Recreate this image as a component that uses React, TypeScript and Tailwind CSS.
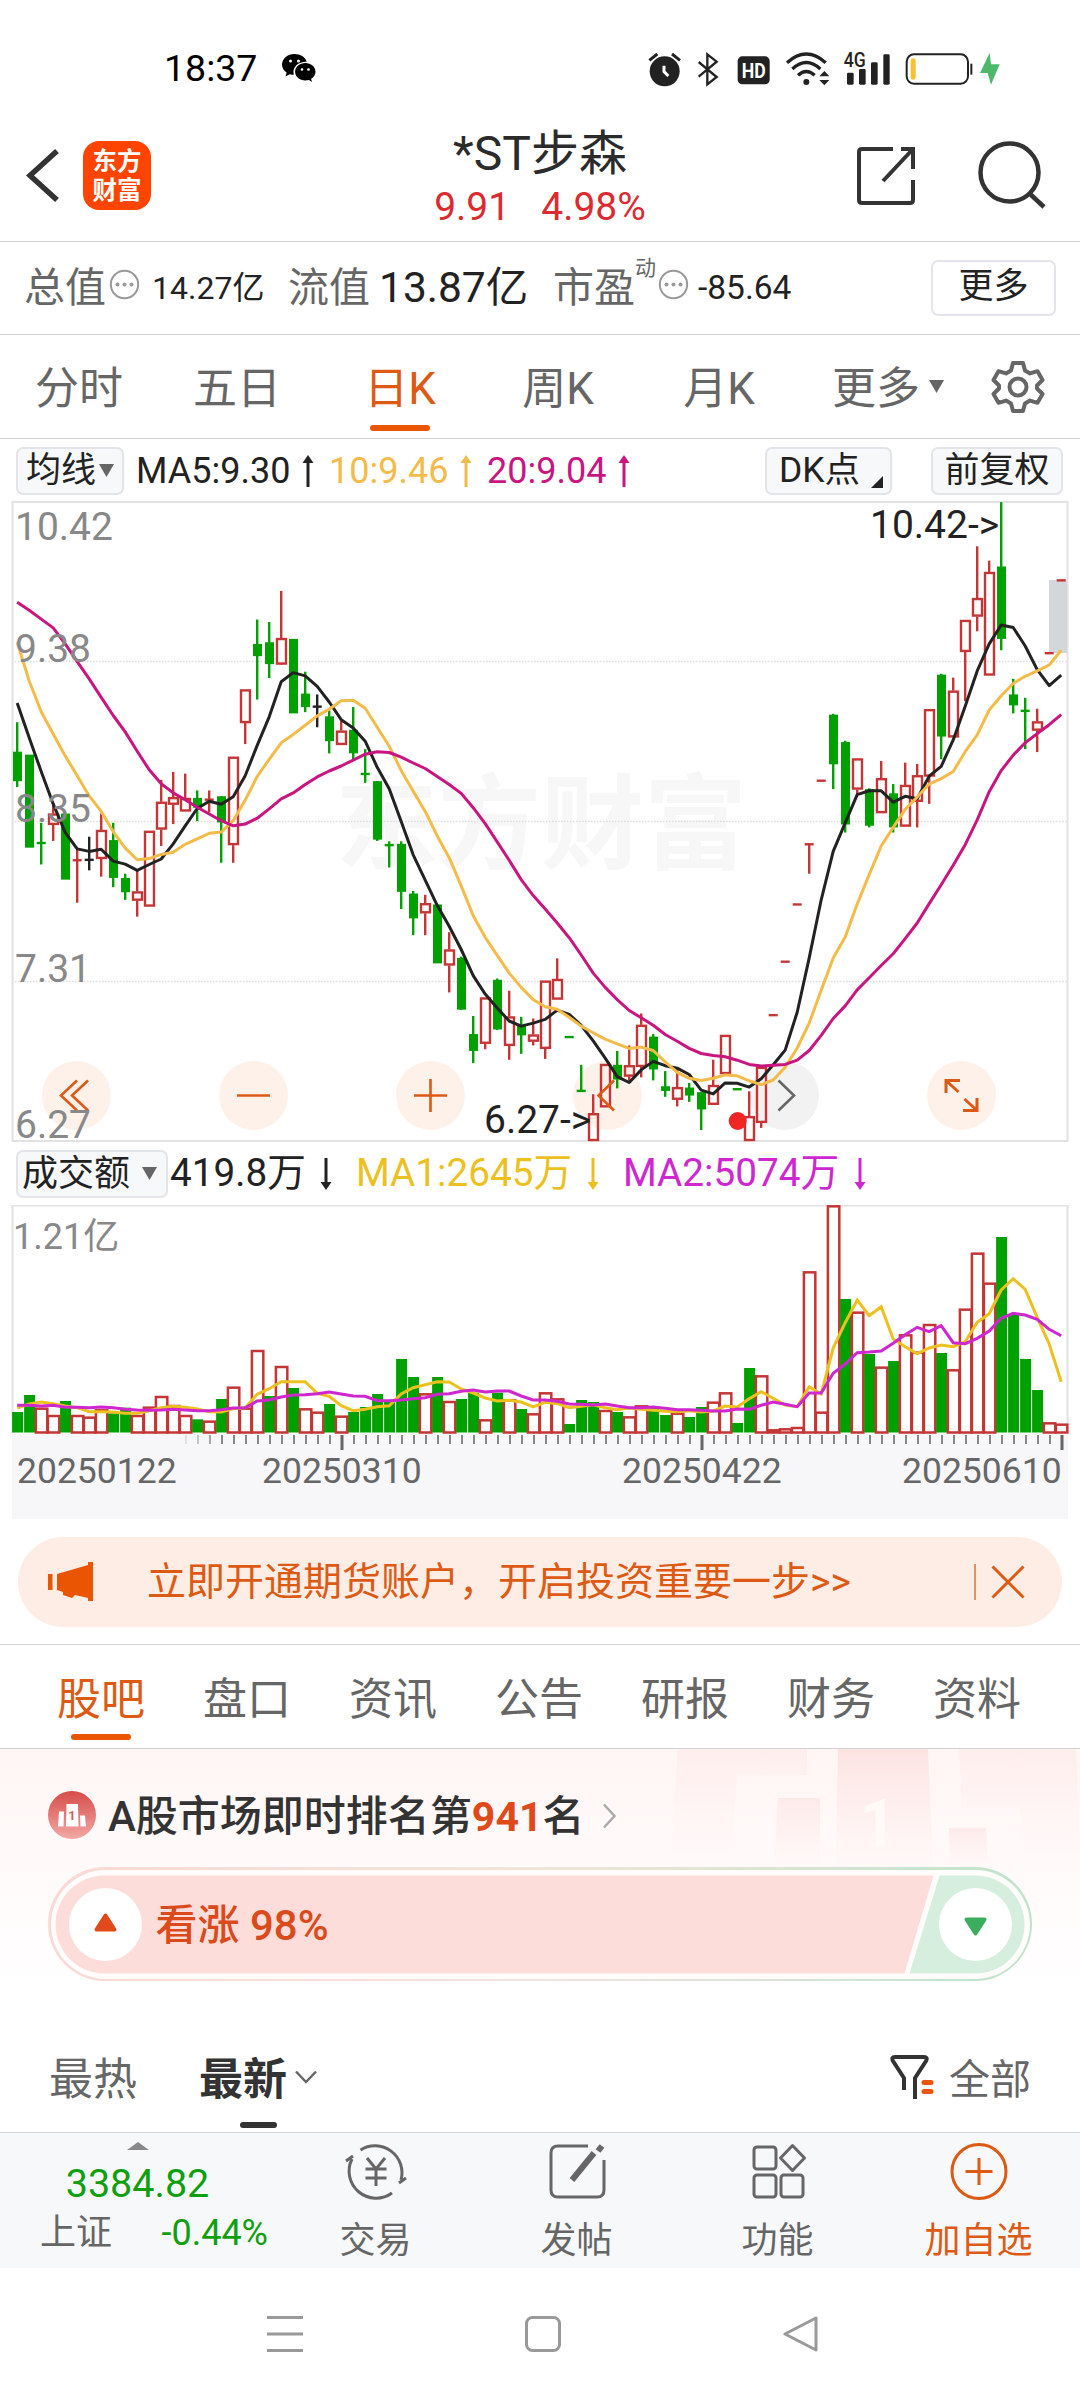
import { ReactNode } from 'react';

type Candle = {
  t: 'r' | 'g' | 'k';
  // wick top / bottom, body top / bottom (single value = flat line)
  w?: [number, number];
  b: [number] | [number, number];
};

const RED = '#c43535';
const GREEN = '#00a000';
const BLACK = '#222222';

const candles: Candle[] = [
  { t: 'g', w: [528, 682], b: [598, 668] },
  { t: 'g', b: [605, 826] },
  { t: 'g', w: [767, 866], b: [815] },
  { t: 'r', w: [720, 810], b: [745, 772] },
  { t: 'g', b: [745, 902] },
  { t: 'r', w: [830, 957], b: [856] },
  { t: 'k', w: [800, 880], b: [855] },
  { t: 'r', w: [745, 895], b: [784, 853] },
  { t: 'g', w: [767, 920], b: [808, 898] },
  { t: 'g', w: [888, 950], b: [898, 932] },
  { t: 'r', w: [880, 990], b: [930, 952] },
  { t: 'r', b: [786, 966] },
  { t: 'r', w: [665, 822], b: [717, 783] },
  { t: 'r', w: [646, 770], b: [706, 724] },
  { t: 'r', w: [650, 740], b: [708, 740] },
  { t: 'g', w: [690, 763], b: [708, 731] },
  { t: 'r', w: [690, 742], b: [712] },
  { t: 'g', w: [704, 862], b: [704, 766] },
  { t: 'r', w: [610, 862], b: [610, 820] },
  { t: 'r', w: [450, 580], b: [450, 530] },
  { t: 'g', w: [284, 474], b: [342, 371] },
  { t: 'g', w: [290, 423], b: [338, 390] },
  { t: 'r', w: [216, 390], b: [328, 391] },
  { t: 'g', b: [330, 507] },
  { t: 'g', w: [408, 504], b: [460, 492] },
  { t: 'k', w: [462, 540], b: [491] },
  { t: 'g', w: [500, 602], b: [514, 573] },
  { t: 'r', w: [525, 582], b: [548, 582] },
  { t: 'g', w: [492, 620], b: [546, 602] },
  { t: 'g', w: [592, 672], b: [651] },
  { t: 'g', w: [668, 810], b: [668, 807] },
  { t: 'g', w: [811, 873], b: [820] },
  { t: 'g', w: [811, 972], b: [817, 931] },
  { t: 'g', w: [929, 1034], b: [935, 994] },
  { t: 'r', w: [938, 1034], b: [958, 982] },
  { t: 'g', b: [961, 1101] },
  { t: 'r', w: [1027, 1170], b: [1068, 1106] },
  { t: 'g', w: [1085, 1211], b: [1088, 1211] },
  { t: 'g', w: [1226, 1338], b: [1269, 1309] },
  { t: 'r', w: [1182, 1305], b: [1182, 1292] },
  { t: 'g', w: [1137, 1259], b: [1140, 1258] },
  { t: 'r', w: [1166, 1330], b: [1227, 1297] },
  { t: 'g', w: [1228, 1316], b: [1248, 1272] },
  { t: 'r', w: [1232, 1296], b: [1270, 1287] },
  { t: 'r', w: [1142, 1328], b: [1142, 1304] },
  { t: 'r', w: [1089, 1187], b: [1138, 1187] },
  { t: 'g', b: [1276] },
  { t: 'g', w: [1342, 1405], b: [1404] },
  { t: 'r', w: [1412, 1523], b: [1457, 1523] },
  { t: 'r', b: [1340, 1443] },
  { t: 'g', w: [1309, 1398], b: [1342, 1377] },
  { t: 'r', w: [1296, 1380], b: [1343, 1370] },
  { t: 'r', w: [1220, 1372], b: [1247, 1347] },
  { t: 'g', w: [1269, 1379], b: [1275, 1353] },
  { t: 'g', w: [1357, 1418], b: [1393, 1404] },
  { t: 'r', w: [1350, 1441], b: [1395, 1425] },
  { t: 'g', w: [1385, 1430], b: [1396, 1415] },
  { t: 'g', w: [1407, 1497], b: [1407, 1448] },
  { t: 'r', w: [1330, 1437], b: [1390, 1437] },
  { t: 'r', b: [1271, 1364] },
  { t: 'g', b: [1400] },
  { t: 'r', w: [1405, 1523], b: [1464, 1523] },
  { t: 'r', w: [1347, 1492], b: [1347, 1480] },
  { t: 'r', b: [1224] },
  { t: 'r', b: [1097] },
  { t: 'r', b: [961] },
  { t: 'r', w: [816, 888], b: [818] },
  { t: 'r', b: [667] },
  { t: 'g', w: [508, 687], b: [510, 628] },
  { t: 'g', w: [572, 790], b: [575, 771] },
  { t: 'r', w: [614, 700], b: [614, 688] },
  { t: 'g', w: [685, 778], b: [687, 774] },
  { t: 'r', w: [620, 744], b: [661, 744] },
  { t: 'g', w: [675, 790], b: [697, 778] },
  { t: 'r', w: [624, 776], b: [677, 776] },
  { t: 'r', w: [627, 778], b: [654, 717] },
  { t: 'r', w: [497, 722], b: [497, 657] },
  { t: 'g', w: [413, 616], b: [415, 562] },
  { t: 'r', w: [422, 564], b: [453, 564] },
  { t: 'r', w: [285, 478], b: [285, 361] },
  { t: 'r', w: [110, 312], b: [233, 277] },
  { t: 'r', w: [144, 417], b: [171, 417] },
  { t: 'g', w: [5, 357], b: [158, 330] },
  { t: 'g', w: [425, 507], b: [462, 488] },
  { t: 'g', w: [470, 592], b: [501] },
  { t: 'r', w: [496, 599], b: [526, 548] },
  { t: 'r', b: [364] },
  { t: 'r', b: [191] },
];

const ma5 = [
  482, 565, 645, 722, 790, 829, 835, 830, 858, 865, 880, 866, 853, 817, 774, 733, 716, 723, 705, 655, 583, 515,
  432, 410, 418, 443, 480, 522, 542, 573, 635, 686, 764, 843, 903, 963, 1013, 1068, 1130, 1174, 1207, 1238, 1250,
  1243, 1234, 1212, 1222, 1248, 1285, 1326, 1370, 1384, 1354, 1334, 1344, 1350, 1365, 1402, 1411, 1385, 1386,
  1395, 1375, 1342, 1307, 1217, 1088, 950, 835, 767, 700, 691, 691, 718, 704, 710, 656, 633, 570, 490, 406, 342,
  297, 303, 347, 403, 441, 416,
];
const ma10 = [
  338, 430, 503, 556, 608, 655, 703, 740, 788, 827, 855, 852, 842, 837, 818, 805, 792, 789, 762, 713, 657, 616,
  577, 557, 535, 513, 497, 477, 476, 495, 540, 585, 643, 692, 740, 798, 850, 917, 988, 1039, 1082, 1124, 1158,
  1187, 1204, 1210, 1229, 1250, 1266, 1281, 1292, 1303, 1300, 1308, 1335, 1360, 1374, 1379, 1374, 1366, 1368,
  1380, 1389, 1378, 1348, 1302, 1243, 1165, 1088, 1038, 960, 890, 822, 778, 735, 706, 675, 662, 645, 598, 558,
  499, 465, 436, 419, 406, 392, 357,
];
const ma20 = [
  243, 262, 283, 304, 342, 384, 425, 469, 512, 551, 597, 641, 674, 696, 712, 730, 746, 762, 774, 770, 756, 734,
  710, 696, 676, 658, 644, 632, 618, 604, 598, 600, 611, 625, 638, 657, 676, 697, 731, 769, 812, 856, 902, 940,
  972, 1005, 1040, 1081, 1124, 1158, 1187, 1213, 1230, 1248, 1270, 1286, 1303, 1315, 1320, 1323, 1331, 1341, 1345,
  1343, 1341, 1331, 1308, 1272, 1232, 1202, 1164, 1135, 1106, 1078, 1042, 1005, 959, 914, 868, 819, 760, 693, 643,
  606, 577, 555, 534, 510,
];

// top edge of each volume bar, colour in the parallel string below
const vols = [
  816, 765, 803, 825, 783, 825, 830, 808, 820, 803, 825, 800, 768, 795, 825, 838, 842, 777, 740, 803, 630, 768,
  678, 744, 805, 815, 792, 827, 816, 801, 762, 781, 657, 711, 760, 711, 783, 777, 758, 838, 758, 778, 807, 820,
  757, 775, 852, 780, 786, 810, 816, 829, 796, 800, 825, 818, 831, 801, 785, 757, 849, 684, 706, 868, 865, 861,
  394, 815, 196, 477, 515, 642, 680, 663, 583, 635, 552, 639, 688, 506, 338, 428, 291, 523, 657, 750, 847, 851,
];
const volColors =
  'ggrrgrrrggrrrrrgrgrrrgrgrrgrggggggrgrggrgrgrrrgggrgrrggrggrrggrrrrrrrgrgrgrrrgrrrrggggrr';

const vma1 = [
  804, 792, 786, 791, 798, 803, 815, 815, 816, 820, 820, 812, 803, 799, 802, 807, 815, 816, 806, 803, 763, 746,
  725, 725, 725, 760, 769, 797, 812, 808, 800, 797, 762, 743, 734, 725, 726, 747, 759, 774, 783, 781, 786, 801,
  787, 791, 803, 799, 794, 803, 809, 804, 808, 811, 814, 815, 812, 816, 813, 798, 801, 776, 755, 775, 795, 800,
  740, 762, 624, 548, 480, 527, 500, 597, 620, 641, 624, 615, 620, 605, 547, 521, 450, 416, 448, 532, 612, 725,
];
const vma2 = [
  796, 796, 798, 796, 802, 802, 803, 801, 803, 808, 810, 811, 810, 808, 810, 812, 812, 809, 804, 803, 783, 780,
  771, 765, 764, 761, 756, 762, 768, 769, 782, 782, 780, 776, 773, 763, 761, 754, 750, 756, 753, 753, 768, 780,
  780, 784, 792, 793, 795, 792, 798, 803, 803, 801, 805, 809, 809, 811, 813, 813, 807, 808, 796, 786, 793, 800,
  759, 759, 700, 672, 638, 636, 633, 610, 584, 562, 575, 557, 608, 611, 595, 573, 535, 520, 525, 538, 568, 587,
];

const cx = (i: number) => 17.2 + i * 12;
const py = (v: number) => v / 2.376;
const vy = (v: number) => (v - 195) / 3;

const line = (values: number[], y: (v: number) => number) =>
  values.map((v, i) => `${cx(i).toFixed(1)},${y(v).toFixed(1)}`).join(' ');

const circles = [76.5, 253.5, 430.5, 607.5, 784.5, 961.5];

function KLineChart() {
  return (
    <svg width="1080" height="643" viewBox="0 0 1080 643" className="block shrink-0 font-[Roboto]">
      <text
        x="541"
        y="361"
        fontSize="103"
        fontWeight="700"
        fill="#f7f7f7"
        textAnchor="middle"
        className="font-['Noto_Sans_CJK_SC']"
      >
        东方财富
      </text>
      {[161.6, 321.6, 481.5].map((y) => (
        <line key={y} x1="12" x2="1067" y1={y} y2={y} stroke="#dddddd" strokeWidth="1.5" strokeDasharray="1.5 1.5" />
      ))}
      <rect x="12.5" y="2" width="1055" height="639" fill="none" stroke="#e2e2e2" strokeWidth="2" />
      {circles.map((x) => (
        <circle key={x} cx={x} cy="595.5" r="34.5" fill={x === 784.5 ? '#f2f2f2' : '#fef1ea'} />
      ))}
      <rect x="1049" y="80" width="18" height="73" fill="#d3d7dc" />
      {candles.map((c, i) => {
        const color = c.t === 'r' ? RED : c.t === 'g' ? GREEN : BLACK;
        const x = cx(i);
        const top = py(c.b[0]);
        const bottom = c.b.length === 2 ? py(c.b[1]) : top;
        return (
          <g key={i} stroke={color} strokeWidth="2.4">
            {c.w && (c.b.length === 1 || c.t === 'g') && <line x1={x} x2={x} y1={py(c.w[0])} y2={py(c.w[1])} />}
            {c.w && c.b.length === 2 && c.t === 'r' && (
              <>
                <line x1={x} x2={x} y1={py(c.w[0])} y2={top} />
                <line x1={x} x2={x} y1={bottom} y2={py(c.w[1])} />
              </>
            )}
            {c.b.length === 1 && <line x1={x - 4.5} x2={x + 4.5} y1={top} y2={top} />}
            {c.b.length === 2 && c.t === 'g' && (
              <rect x={x - 4.2} y={top} width="9" height={bottom - top} fill={color} stroke="none" />
            )}
            {c.b.length === 2 && c.t === 'r' && (
              <rect x={x - 4.2} y={top + 1} width="9" height={Math.max(bottom - top - 2, 2)} fill="none" />
            )}
          </g>
        );
      })}
      <circle cx="737.7" cy="621" r="9" fill="#f22525" />
      <g fill="none" strokeWidth="3" strokeLinejoin="round">
        <polyline points={line(ma5, py)} stroke={BLACK} />
        <polyline points={line(ma10, py)} stroke="#f3bb49" />
        <polyline points={line(ma20, py)} stroke="#c8157f" />
      </g>
      <g fill="none" stroke="#dc5a16" strokeWidth="2.6">
        <path d="M77 580.5 61 595.5 77 610.5M88 580.5 72 595.5 88 610.5" />
        <path d="M237 595.5H270" />
        <path d="M414 595.5H447M430.5 579V612" />
        <path d="M614 580.5 598.5 595.5 614 610.5" />
        <path d="M778.5 580.5 794 595.5 778.5 610.5" stroke="#666666" />
        <path d="M946 593V580.5H960M946.5 581 958.5 592M977 598V610.5H963M976.5 610 964.5 599" strokeWidth="3" />
      </g>
      <g fontSize="39" fill="#888888">
        <text x="15" y="40">10.42</text>
        <text x="15" y="161.5">9.38</text>
        <text x="15" y="321.5">8.35</text>
        <text x="15" y="481.5">7.31</text>
        <text x="15" y="637.5">6.27</text>
      </g>
      <g fontSize="39" fill="#222222">
        <text x="870" y="38">10.42-&gt;</text>
        <text x="484" y="632.5">6.27-&gt;</text>
      </g>
    </svg>
  );
}

function VolumeChart() {
  return (
    <svg width="1080" height="229" viewBox="0 0 1080 229" className="block shrink-0">
      <path d="M12.5 228V0.5H1067.5V228" fill="none" stroke="#e2e2e2" strokeWidth="2" />
      <text x="13" y="43.5" fontSize="36" fill="#888888" className="font-[Roboto,'Noto_Sans_CJK_SC']">
        1.21亿
      </text>
      {vols.map((v, i) => {
        const x = cx(i) + 0.4;
        const y = vy(v);
        return volColors[i] === 'g' ? (
          <rect key={i} x={x - 5.5} y={y} width="11" height={227.5 - y} fill={GREEN} />
        ) : (
          <rect
            key={i}
            x={x - 5.7}
            y={y + 1}
            width="11.4"
            height={Math.max(226.5 - y, 1)}
            fill="#ffffff"
            stroke={RED}
            strokeWidth="2.5"
          />
        );
      })}
      <g fill="none" strokeWidth="3">
        <polyline points={line(vma1, vy)} stroke="#ecc11f" />
        <polyline points={line(vma2, vy)} stroke="#cf27cf" />
      </g>
    </svg>
  );
}

function DateAxis() {
  const ticks = Array.from({ length: 74 }, (_, k) => k);
  return (
    <div className="mx-3 h-[85px] shrink-0 bg-[#f7f7fa] text-[35.5px] leading-none text-[#666666]">
      <svg width="1056" height="19" viewBox="12 0 1056 19" className="block">
        {ticks.map((k) => {
          const long = k === 13 || k === 43 || k === 73;
          return (
            <line
              key={k}
              x1={186 + k * 12}
              x2={186 + k * 12}
              y1="1"
              y2={long ? 16 : 10}
              stroke={long ? '#666666' : '#888888'}
              strokeWidth={long ? 3 : 2}
              opacity={k < 3 ? 0.2 + k * 0.25 : 1}
            />
          );
        })}
      </svg>
      <div className="flex pl-[5px] pt-px">
        <span className="w-[245px]">20250122</span>
        <span className="w-[360px]">20250310</span>
        <span className="w-[280px]">20250422</span>
        <span>20250610</span>
      </div>
    </div>
  );
}

function Arrow({ color, down }: { color: string; down?: boolean }) {
  return (
    <svg width="12" height="34" viewBox="0 0 12 34" className={down ? 'rotate-180' : ''}>
      <path d="M6 6V33" stroke={color} strokeWidth="3" />
      <path d="M6 1 11.5 9H0.5Z" fill={color} />
    </svg>
  );
}

function MoreDots() {
  return (
    <svg width="31" height="31" viewBox="0 0 31 31">
      <circle cx="15.5" cy="15.5" r="13.7" fill="none" stroke="#999999" strokeWidth="2" />
      <g fill="#999999">
        <circle cx="8.5" cy="15.5" r="2" />
        <circle cx="15.5" cy="15.5" r="2" />
        <circle cx="22.5" cy="15.5" r="2" />
      </g>
    </svg>
  );
}

function StatusBar() {
  return (
    <div className="flex h-[112px] shrink-0 items-center pl-[164px] pt-[25px]">
      <span className="pt-px text-[37.5px] leading-none text-black">18:37</span>
      <svg width="34" height="29" viewBox="0 0 34 29" className="ml-[25px]">
        <path d="M12.5 0C5.5 0 0 4.7 0 10.5c0 3.3 1.800 6.200 4.600 8.100L3.500 22.500l4.300-2.300c1.500.4 2.600.6 4 .6-2-8 5-13.300 12.900-13C23.300 3 18.400 0 12.500 0Z" />
        <path d="M33.5 17.7c0-4.8-4.7-8.7-10.2-8.7s-10.2 3.9-10.2 8.7 4.6 8.8 10.2 8.8c1.2 0 2.3-.2 3.4-.5l3.3 2-.9-3.2c2.700-1.700 4.400-4.200 4.400-7.100Z" />
        <g fill="#ffffff">
          <circle cx="8.5" cy="7" r="1.5" />
          <circle cx="16.5" cy="7" r="1.5" />
          <circle cx="20" cy="15.5" r="1.3" />
          <circle cx="26.5" cy="15.5" r="1.3" />
        </g>
      </svg>
      <div className="ml-[332px] flex items-center">
        <svg width="34" height="36" viewBox="82 32 102 108">
          <circle cx="132" cy="93" r="45" fill="#222222" />
          <path d="M86 60 110 41M178 60 154 41" stroke="#222222" strokeWidth="9" />
          <path d="M130 76V94L143 107" fill="none" stroke="#ffffff" strokeWidth="9" />
        </svg>
        <svg width="24" height="36" viewBox="228 32 72 108" className="ml-[14px]">
          <path d="M236 65 290 110 262 132V42L290 64 236 109" fill="none" stroke="#222222" strokeWidth="7" />
        </svg>
        <svg width="34" height="36" viewBox="352 32 102 108" className="ml-[17px]">
          <rect x="354" y="48" width="96" height="84" rx="14" fill="#222222" />
          <text
            x="402"
            y="113"
            fontSize="62"
            fontWeight="700"
            fill="#ffffff"
            textAnchor="middle"
            textLength="72"
            lengthAdjust="spacingAndGlyphs"
          >
            HD
          </text>
        </svg>
        <svg width="46" height="36" viewBox="496 32 138 108" className="ml-[14px]">
          <g fill="none" stroke="#222222" strokeWidth="10">
            <path d="M502 67Q560 15 618 67" />
            <path d="M518 86Q560 47 602 86" />
            <path d="M535 105Q560 82 585 105" />
          </g>
          <circle cx="560" cy="125" r="9" fill="#222222" />
          <path d="M599 108 614 92 629 108ZM599 119 614 135 629 119Z" fill="#222222" />
        </svg>
        <svg width="48" height="40" viewBox="670 26 144 120" className="ml-[12px]">
          <text x="672" y="80" fontSize="60" fontWeight="500" fill="#222222" textLength="66" lengthAdjust="spacingAndGlyphs">
            4G
          </text>
          <g fill="#222222">
            <rect x="682" y="97" width="20" height="36" rx="4" />
            <rect x="718" y="86" width="20" height="47" rx="4" />
            <rect x="754" y="66" width="20" height="67" rx="4" />
            <rect x="791" y="42" width="19" height="91" rx="4" />
          </g>
        </svg>
        <svg width="68" height="36" viewBox="856 32 204 108" className="ml-[14px]">
          <rect x="861" y="42" width="184" height="88" rx="22" fill="none" stroke="#222222" strokeWidth="6" />
          <rect x="873" y="54" width="15" height="64" rx="7" fill="#f8c131" />
          <path d="M1055 70V103" stroke="#222222" strokeWidth="6" />
        </svg>
        <svg width="22" height="36" viewBox="1078 32 66 108" className="ml-[6px]">
          <path d="M1110 38 1081 98H1104L1114 133 1140 72H1114Z" fill="#4cb86b" />
        </svg>
      </div>
    </div>
  );
}

function Header() {
  return (
    <div className="flex h-[130px] shrink-0 items-center border-b border-[#d2d2d4]">
      <svg width="34" height="56" viewBox="0 0 34 56" className="mb-[2px] ml-[26px]">
        <path d="M31 3 4 27.5 31 52" fill="none" stroke="#333333" strokeWidth="5.5" />
      </svg>
      <div className="mb-[2px] ml-[23px] flex h-[69px] w-[68px] flex-col items-center justify-center rounded-[16px] bg-[#ff4400] text-[24.5px] font-bold leading-[29px] text-white">
        <span>东方</span>
        <span>财富</span>
      </div>
      <div className="ml-[229px] flex w-[320px] flex-col items-center pt-[5px]">
        <div className="text-[48px] leading-[56px] text-[#2b2b2b]">*ST步森</div>
        <div className="flex gap-[31px] text-[39px] leading-[50px] text-[#dc2b30]">
          <span>9.91</span>
          <span>4.98%</span>
        </div>
      </div>
      <svg width="62" height="62" viewBox="0 0 62 62" className="mb-[2px] ml-[156px]">
        <path
          d="M37 4H6Q3 4 3 7V55Q3 58 6 58H54Q57 58 57 55V35M45 4H57V24M57 4 27 36"
          fill="none"
          stroke="#333333"
          strokeWidth="4"
        />
      </svg>
      <svg width="70" height="70" viewBox="0 0 70 70" className="mb-[3px] ml-[59px]">
        <circle cx="32.5" cy="32.5" r="29" fill="none" stroke="#333333" strokeWidth="4.5" />
        <path d="M52 53 67 67" stroke="#333333" strokeWidth="4.5" />
      </svg>
    </div>
  );
}

function Summary() {
  return (
    <div className="flex h-[93px] shrink-0 items-center border-b border-[#d2d2d4] pl-[24px] leading-none text-[#222222]">
      <span className="w-[85px] text-[41px] text-[#666666]">总值</span>
      <span className="mt-[-8px]">
        <MoreDots />
      </span>
      <span className="ml-[12px] w-[136px] text-[32px]">14.27亿</span>
      <span className="w-[91px] text-[41px] text-[#666666]">流值</span>
      <span className="w-[174px] text-[42.5px]">13.87亿</span>
      <span className="w-[82px] text-[41px] text-[#666666]">市盈</span>
      <span className="mb-[40px] w-[23px] text-[21px] text-[#666666]">动</span>
      <span className="mt-[-8px]">
        <MoreDots />
      </span>
      <span className="ml-[9px] w-[233px] text-[33.5px]">-85.64</span>
      <span className="flex h-[56px] w-[125px] items-center justify-center rounded-[7px] border-2 border-[#e4e4ea] pb-[3px] text-[35px]">
        更多
      </span>
    </div>
  );
}

function PeriodTabs() {
  return (
    <div className="flex h-[104px] shrink-0 border-b border-[#d2d2d4] text-[44px] leading-[108px] text-[#666666]">
      <span className="w-[158px] text-center">分时</span>
      <span className="w-[158px] text-center">五日</span>
      <div className="flex w-[168px] flex-col items-center text-[#dd5a14]">
        <span className="h-[90px]">日K</span>
        <span className="h-[6px] w-[60px] rounded-full bg-[#ea5504]" />
      </div>
      <span className="w-[148px] text-center">周K</span>
      <span className="w-[174px] text-center">月K</span>
      <span className="ml-[26px]">更多</span>
      <svg width="15" height="13" viewBox="0 0 15 13" className="ml-[9px] mt-[45px]">
        <path d="M0 0H15L7.5 13Z" fill="#666666" />
      </svg>
      <svg width="54" height="54" viewBox="0 0 54 54" className="ml-[47px] mt-[25px]">
        <path
          d="M22 3H32L34 10.5 39 13.4 46.5 11.2 51.5 20 46 25.5V28.5L51.5 34 46.5 42.8 39 40.6 34 43.5 32 51H22L20 43.5 15 40.6 7.5 42.8 2.5 34 8 28.5V25.5L2.5 20 7.5 11.2 15 13.4 20 10.5Z"
          fill="none"
          stroke="#666666"
          strokeWidth="4"
          strokeLinejoin="round"
        />
        <circle cx="27" cy="27" r="8.5" fill="none" stroke="#666666" strokeWidth="4" />
      </svg>
    </div>
  );
}

function MaRow() {
  return (
    <div className="flex h-[61px] shrink-0 items-center pl-4 pt-[2px] text-[36px] leading-none text-[#222222]">
      <div className="flex h-[48px] w-[108px] items-center gap-[3px] rounded-[7px] border-2 border-[#e2e4ea] bg-[#f7f8fa] pl-[8px] text-[35px]">
        均线
        <svg width="15" height="13" viewBox="0 0 15 13">
          <path d="M0 0H15L7.5 13Z" fill="#666666" />
        </svg>
      </div>
      <span className="ml-[12px] w-[166px]">MA5:9.30</span>
      <Arrow color="#222222" />
      <span className="ml-[15px] w-[131px] text-[#f3bb49]">10:9.46</span>
      <Arrow color="#f3bb49" />
      <span className="ml-[15px] w-[131px] text-[#c8157f]">20:9.04</span>
      <Arrow color="#c8157f" />
      <div className="ml-[135px] flex h-[48px] w-[127px] items-center rounded-[7px] border-2 border-[#e2e4ea] bg-[#f7f8fa] pl-[12px] text-[35.5px]">
        DK点
        <svg width="12" height="12" viewBox="0 0 12 12" className="ml-[11px] mt-[22px]">
          <path d="M12 0V12H0Z" fill="#222222" />
        </svg>
      </div>
      <div className="ml-[39px] flex h-[48px] w-[132px] items-center justify-center rounded-[7px] border-2 border-[#e2e4ea] bg-[#f7f8fa] text-[35px]">
        前复权
      </div>
    </div>
  );
}

function VolumeRow() {
  return (
    <div className="flex h-[62px] shrink-0 items-center pb-px pl-4 text-[38.7px] leading-none text-[#222222]">
      <div className="flex h-[48px] w-[152px] items-center gap-[12px] rounded-[7px] border-2 border-[#e2e4ea] bg-[#f7f8fa] pl-[4px] text-[36px]">
        成交额
        <svg width="15" height="13" viewBox="0 0 15 13">
          <path d="M0 0H15L7.5 13Z" fill="#666666" />
        </svg>
      </div>
      <span className="ml-[2px] w-[150px]">419.8万</span>
      <Arrow color="#222222" down />
      <span className="ml-[24px] w-[231px] text-[#ecc11f]">MA1:2645万</span>
      <Arrow color="#ecc11f" down />
      <span className="ml-[24px] w-[231px] text-[#cf27cf]">MA2:5074万</span>
      <Arrow color="#cf27cf" down />
    </div>
  );
}

function Banner() {
  return (
    <div className="mx-[18px] mt-[18px] flex h-[90px] shrink-0 items-center rounded-[45px] bg-[#fdede4] text-[39px] leading-none text-[#dd5a14]">
      <svg width="46" height="40" viewBox="0 0 46 40" className="ml-[30px]">
        <path d="M0 12H4.5V28H0ZM9 12 40 3V0H45V39H40V36L27 33 24 36 15 33V30L9 28Z" fill="#ea5504" />
      </svg>
      <span className="ml-[53px] w-[827px] whitespace-nowrap">立即开通期货账户，开启投资重要一步&gt;&gt;</span>
      <span className="h-[36px] w-[2px] bg-[#e2915f]" />
      <svg width="34" height="34" viewBox="0 0 34 34" className="ml-[15px]">
        <path d="M1.5 1.5 32.5 32.5M32.5 1.5 1.5 32.5" stroke="#dd5a14" strokeWidth="3" />
      </svg>
    </div>
  );
}

function SectionTabs() {
  const tabs = ['股吧', '盘口', '资讯', '公告', '研报', '财务', '资料'];
  return (
    <div className="mt-[17px] flex h-[105px] shrink-0 border-y border-[#d2d2d4] pl-7 text-[44px] text-[#666666]">
      {tabs.map((tab, i) => (
        <div key={tab} className="flex w-[146px] flex-col items-center">
          <span className={i === 0 ? 'h-[89px] leading-[110px] text-[#dd5a14]' : 'h-[89px] leading-[110px]'}>{tab}</span>
          {i === 0 && <span className="h-[6px] w-[60px] rounded-full bg-[#ea5504]" />}
        </div>
      ))}
    </div>
  );
}

function RankCard() {
  return (
    <div className="relative h-[251px] shrink-0 bg-linear-to-b from-[#fff6f5] to-white">
      <svg width="420" height="120" viewBox="0 0 420 120" className="absolute right-0 top-0">
        <defs>
          <linearGradient id="podium" x1="0" y1="0" x2="0" y2="1">
            <stop offset="0" stopColor="#fbdedd" stopOpacity="0.8" />
            <stop offset="1" stopColor="#fdeceb" stopOpacity="0.1" />
          </linearGradient>
        </defs>
        <g fill="url(#podium)">
          <path d="M18 0H147V26H77L70 119H10Z" opacity="0.4" />
          <path d="M178 0H268L273 119H176Z" />
          <path d="M118 49H160V119H114Z" opacity="0.7" />
          <path d="M299 0H416L420 119H366L360 59H302Z" opacity="0.4" />
          <path d="M289 79H326L328 119H290Z" opacity="0.7" />
        </g>
        <text x="218" y="98" fontSize="66" fontWeight="700" fill="#fff9f8" textAnchor="middle">
          1
        </text>
      </svg>
      <div className="relative flex h-[118px] items-center pl-[48px] pt-[18px] text-[42px] font-medium leading-none text-[#333333]">
        <svg width="48" height="48" viewBox="0 0 48 48" className="mb-[4px]">
          <defs>
            <linearGradient id="rank" x1="0" y1="0" x2="0" y2="1">
              <stop offset="0" stopColor="#d64c48" />
              <stop offset="1" stopColor="#f2a9a5" />
            </linearGradient>
          </defs>
          <circle cx="24" cy="24" r="24" fill="url(#rank)" />
          <path d="M11 20.500H16L15.500 35.500H10ZM18.500 13H30L30.500 35.500H18ZM32 24.500H37L38 35.500H32.500Z" fill="#ffffff" />
          <text x="24" y="29" fontSize="13" fontWeight="700" fill="#d9605c" textAnchor="middle">
            1
          </text>
        </svg>
        <span className="ml-[12px]">A股市场即时排名第</span>
        <span className="text-[41px] font-bold text-[#e04a1a]">941</span>
        <span>名</span>
        <svg width="15" height="26" viewBox="0 0 15 26" className="mb-[2px] ml-[18px]">
          <path d="M2 1.5 12.5 13 2 24.5" fill="none" stroke="#aaaaaa" strokeWidth="2.5" />
        </svg>
      </div>
      <div className="relative mx-[48px] flex h-[114px] items-center rounded-full bg-linear-to-r from-[#fad9d6] via-[#f0e4dc] to-[#bfe3cb] p-[2.5px]">
        <div className="relative h-full w-full rounded-full bg-[#fffcfb]">
          <svg width="979" height="109" viewBox="50.5 2.5 979 109" className="absolute left-0 top-0">
            <path d="M104 8H933L904 106H104A49 49 0 0 1 104 8Z" fill="#fdddda" />
            <path d="M939 8H975A49 49 0 0 1 975 106H909Z" fill="#d5eedd" />
            <circle cx="105" cy="57" r="36.5" fill="#ffffff" />
            <circle cx="975" cy="57" r="36.5" fill="#ffffff" />
            <path d="M105 48 114 62H96Z" fill="#e04a1a" stroke="#e04a1a" strokeWidth="4" strokeLinejoin="round" />
            <path d="M975 66 966 52H984Z" fill="#3bae5e" stroke="#3bae5e" strokeWidth="4" strokeLinejoin="round" />
          </svg>
          <span className="absolute left-[105px] top-0 text-[42px] font-medium leading-[112px] text-[#db4a1b]">看涨 98%</span>
        </div>
      </div>
    </div>
  );
}

function PostFilter() {
  return (
    <div className="flex h-[132px] shrink-0 text-[44px] leading-[160px] text-[#666666]">
      <span className="ml-[49px] w-[150px]">最热</span>
      <div className="flex w-[118px] flex-col items-start">
        <div className="flex h-[122px] items-start font-bold text-[#333333]">
          <span>最新</span>
          <svg width="22" height="14" viewBox="0 0 22 14" className="ml-[8px] mt-[70px]">
            <path d="M1 1.5 11 12 21 1.5" fill="none" stroke="#666666" strokeWidth="2.5" />
          </svg>
        </div>
        <span className="ml-[41px] h-[6px] w-[37px] shrink-0 rounded-full bg-[#333333]" />
      </div>
      <svg width="44" height="48" viewBox="0 0 44 48" className="ml-[573px] mt-[54px]">
        <path d="M14 36V24L3 7Q1 3 5 3H34Q38 3 36 7L25 24V45" fill="none" stroke="#333333" strokeWidth="4" />
        <path d="M34 28.5H41M34 37.5H41" stroke="#ea5504" strokeWidth="5" strokeLinecap="round" />
      </svg>
      <span className="ml-[15px] text-[41px]">全部</span>
    </div>
  );
}

function NavItem({ label, active, children }: { label: string; active?: boolean; children: ReactNode }) {
  return (
    <div
      className={
        active ? 'flex w-[201px] flex-col items-center text-[#dd5a14]' : 'flex w-[201px] flex-col items-center text-[#666666]'
      }
    >
      <svg
        width="66"
        height="60"
        viewBox="0 0 66 60"
        fill="none"
        stroke="currentColor"
        strokeWidth="3"
        className="mt-[8px]"
      >
        {children}
      </svg>
      <span className="mt-[20px] text-[36px] leading-[40px]">{label}</span>
    </div>
  );
}

function BottomBar() {
  return (
    <div className="flex h-[136px] shrink-0 border-t border-[#d2d2d4] bg-[#f7f8fa]">
      <div className="flex w-[275px] flex-col items-center">
        <svg width="22" height="8" viewBox="0 0 22 8" className="mt-[9px]">
          <path d="M11 0 22 8H0Z" fill="#888888" />
        </svg>
        <span className="mt-[14px] text-[39.5px] leading-[40px] text-[#0f9f0f]">3384.82</span>
        <div className="ml-[33px] mt-[8px] flex w-[228px] items-center justify-between text-[36px] leading-[42px]">
          <span className="text-[#666666]">上证</span>
          <span className="text-[#0f9f0f]">-0.44%</span>
        </div>
      </div>
      <NavItem label="交易">
        <path d="M17.5 9A27 27 0 0 1 58 39M49 52A27 27 0 0 1 9 18M3 20 10 15M56 42 63 37" />
        <path d="M24 17 33 28 42 17M33 28V45M22.5 28H43.5M22.5 37H43.5" />
      </NavItem>
      <NavItem label="发帖">
        <path d="M44 5H14Q7 5 7 12V49Q7 56 14 56H53Q60 56 60 49V19" />
        <path d="M28 39 50 12" strokeWidth="6" />
        <path d="M54 10 58 5" strokeWidth="6" />
      </NavItem>
      <NavItem label="功能">
        <rect x="9" y="6" width="22" height="22" rx="3" />
        <rect x="9" y="34" width="22" height="22" rx="3" />
        <rect x="36" y="34" width="22" height="22" rx="3" />
        <path d="M47.5 4.5 59.5 17 47.5 29.5 35.5 17Z" strokeLinejoin="round" />
      </NavItem>
      <NavItem label="加自选" active>
        <circle cx="33" cy="30.5" r="27" />
        <path d="M33 17V44M19.5 30.5H46.5" />
      </NavItem>
    </div>
  );
}

function SystemNav() {
  return (
    <div className="flex h-[132px] items-center justify-between pl-[267px] pr-[261px]">
      <svg width="36" height="36" viewBox="0 0 36 36">
        <path d="M0 1.5H36M0 18H36M0 34.5H36" stroke="#999999" strokeWidth="3" />
      </svg>
      <svg width="36" height="36" viewBox="0 0 36 36">
        <rect x="1.5" y="1.5" width="33" height="33" rx="6" fill="none" stroke="#999999" strokeWidth="3" />
      </svg>
      <svg width="36" height="36" viewBox="0 0 36 36">
        <path d="M33 2V34L2 18Z" fill="none" stroke="#999999" strokeWidth="3" strokeLinejoin="round" />
      </svg>
    </div>
  );
}

export default function App() {
  return (
    <div className="flex h-[2400px] w-[1080px] flex-col overflow-hidden bg-white font-[Roboto,'Noto_Sans_CJK_SC',sans-serif]">
      <StatusBar />
      <Header />
      <Summary />
      <PeriodTabs />
      <MaRow />
      <KLineChart />
      <VolumeRow />
      <VolumeChart />
      <DateAxis />
      <Banner />
      <SectionTabs />
      <RankCard />
      <PostFilter />
      <BottomBar />
      <SystemNav />
    </div>
  );
}
